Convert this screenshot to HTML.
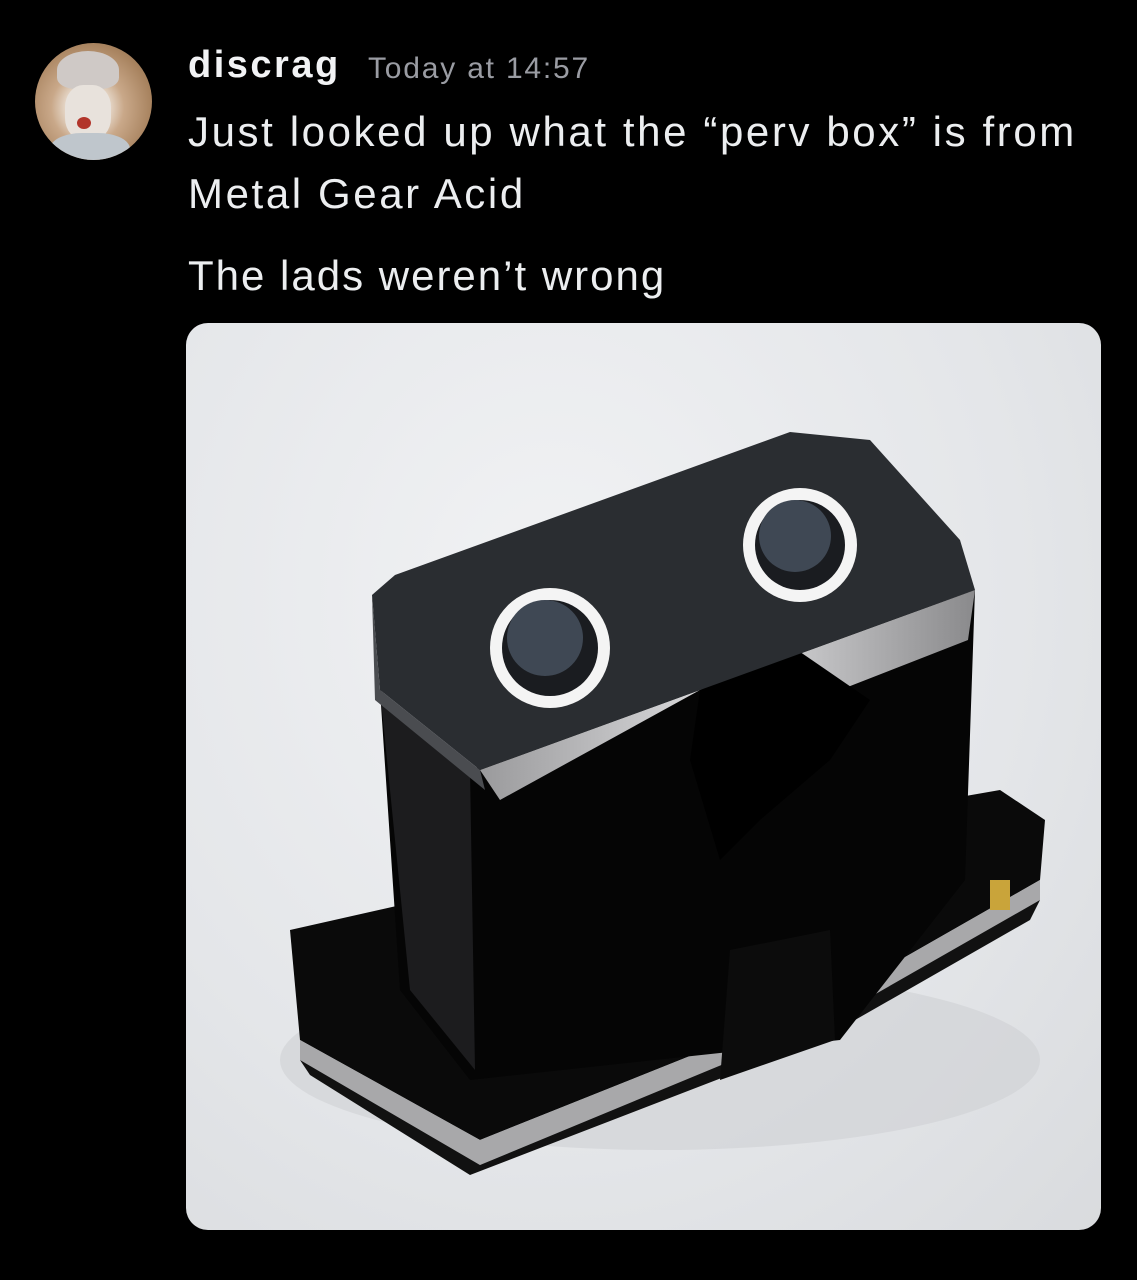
<!DOCTYPE html>
<html><head><meta charset="utf-8"><style>
html,body{margin:0;padding:0;background:#000;width:1137px;height:1280px;overflow:hidden;font-family:"Liberation Sans",sans-serif}
.av{position:absolute;left:35px;top:43px;width:117px;height:117px;border-radius:50%;background:radial-gradient(circle at 45% 55%,#e9ddd0 0 22%,#c9a889 40%,#a8835f 70%,#7d6347 100%);overflow:hidden}
.name{position:absolute;left:188px;top:44px;font-size:38px;font-weight:bold;color:#f2f3f5;letter-spacing:2.5px}
.time{position:absolute;left:368px;top:52px;font-size:30px;color:#9a9ca3;letter-spacing:1.8px}
.msg{position:absolute;left:188px;font-size:42px;color:#eceef0;letter-spacing:2.6px;white-space:nowrap}
.img{position:absolute;left:186px;top:323px;width:915px;height:907px;border-radius:22px;overflow:hidden;background:radial-gradient(ellipse at 40% 30%,#f1f2f4 0%,#e4e6e9 60%,#d9dbde 100%)}
</style></head><body>
<div class="av">
<div style="position:absolute;left:22px;top:8px;width:62px;height:38px;border-radius:50% 50% 30% 30%;background:#cfc9c6"></div>
<div style="position:absolute;left:30px;top:42px;width:46px;height:55px;border-radius:40%;background:#e8e2dc"></div>
<div style="position:absolute;left:42px;top:74px;width:14px;height:12px;border-radius:50%;background:#b2352b"></div>
<div style="position:absolute;left:15px;top:90px;width:80px;height:40px;background:#bfc6cc;border-radius:40% 40% 0 0"></div>
</div>
<div class="name">discrag</div>
<div class="time">Today at 14:57</div>
<div class="msg" style="top:108px">Just looked up what the “perv box” is from</div>
<div class="msg" style="top:170px">Metal Gear Acid</div>
<div class="msg" style="top:252px;letter-spacing:2px">The lads weren’t wrong</div>
<div class="img">
<svg width="915" height="907" viewBox="186 323 915 907" xmlns="http://www.w3.org/2000/svg">
<defs>
<linearGradient id="sil" x1="0" y1="0" x2="1" y2="0"><stop offset="0" stop-color="#9a9a9c"/><stop offset="0.5" stop-color="#e0e0e2"/><stop offset="1" stop-color="#8a8a8c"/></linearGradient>
</defs>
<ellipse cx="660" cy="1060" rx="380" ry="90" fill="#cfd1d4" opacity="0.6"/>
<polygon points="290,930 600,860 1000,790 1045,820 1040,880 830,1000 480,1140 300,1040" fill="#0a0a0a"/>
<polygon points="300,1040 480,1140 830,1000 1040,880 1040,900 830,1020 480,1165 300,1060" fill="#a8a8aa"/>
<polygon points="300,1060 480,1165 830,1020 1040,900 1030,920 820,1040 470,1175 310,1075" fill="#111"/>
<polygon points="380,690 470,770 975,590 965,880 840,1040 470,1080 400,990" fill="#050505"/>
<polygon points="380,690 470,770 475,1070 410,990" fill="#1c1c1e"/>
<polygon points="480,770 975,590 968,640 840,690 790,650 730,650 700,690 500,800" fill="url(#sil)"/>
<polygon points="700,690 790,645 870,700 830,760 760,820 720,860 690,760" fill="#000"/>
<polygon points="730,950 830,930 835,1040 720,1080" fill="#0c0c0c"/>
<polygon points="372,595 395,575 790,432 870,440 960,540 975,590 480,770 380,690" fill="#2a2d31"/>
<polygon points="372,595 380,690 480,770 485,790 375,700" fill="#4a4c50"/>
<circle cx="550" cy="648" r="60" fill="#f4f4f4"/>
<circle cx="550" cy="648" r="48" fill="#1a1c20"/>
<circle cx="545" cy="638" r="38" fill="#3f4854"/>
<circle cx="800" cy="545" r="57" fill="#f4f4f4"/>
<circle cx="800" cy="545" r="45" fill="#1a1c20"/>
<circle cx="795" cy="536" r="36" fill="#3f4854"/>
<rect x="990" y="880" width="20" height="30" fill="#c9a43a"/>
</svg>
</div>
</body></html>
